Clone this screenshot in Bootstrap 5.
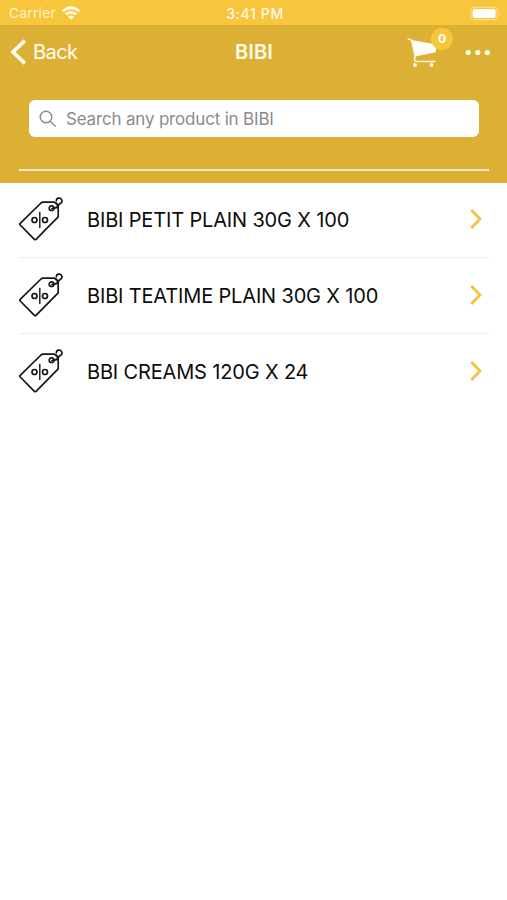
<!DOCTYPE html>
<html lang="en">
<head>
<meta charset="utf-8">
<meta name="viewport" content="width=device-width, initial-scale=1">
<title>BIBI</title>
<link href="https://cdn.jsdelivr.net/npm/bootstrap@5.3.0/dist/css/bootstrap.min.css" rel="stylesheet">
<style>
body { font-family: Inter, "Liberation Sans", sans-serif; min-height: 900px; overflow: hidden; }
svg { display: block; flex: none; }
.status { background: #f8c63d; height: 25px; padding: 2px 9px 0 9px; font-size: 13.7px; line-height: 23px; }
.status > * { flex: 1 1 0; }
.status > :last-child { margin-right: -4px; }
.carrier { color: #fff3cf; letter-spacing: .3px; }
.clock { font-weight: 500; font-size: 14px; letter-spacing: .65px; color: #fffbe9; padding-right: 1px; }
.head { background: #dcb035; height: 158px; }
.topnav { height: 54px; padding: 0 16px 0 10px; }
.topnav > * { flex: 1 1 0; }
.back { font-size: 20px; letter-spacing: -.55px; color: #fffdf2; line-height: 54px; }
.back-text { margin-left: 5px; }
.heading { font-size: 20px; font-weight: 600; letter-spacing: .1px; color: #fffbe9; line-height: 54px; padding-left: 7px; }
.count { left: 24px; top: -9px; width: 22px; height: 22px; background: #f8c63d; font-size: 12px; font-weight: 700; line-height: 22px; }
.search { margin: 21px 28px 0 29px; height: 36.500px; border-radius: 6px; padding-left: 10px; }
.search svg { margin-top: 2px; }
.search input { font-size: 17px; letter-spacing: -.18px; padding: 2px 0 0; margin-left: 9px; }
.search input::placeholder { color: #8b8b8d; opacity: 1; }
.rule { margin: 32.500px 18px 0 19px; height: 2px; background: #f8ebc4; }
.products { margin: -1px 18px 0 19px; }
.products .list-group-item { height: 76px; padding: 0 6px 1px 0; border-color: #ededee; background: transparent; color: #0c0c0c; font-size: 20px; }
.products .list-group-item:last-child { border-bottom: 0; padding-bottom: 2px; }
.label-text { margin-left: 24px; letter-spacing: -.16px; position: relative; top: 1px; }
</style>
<script src="https://cdn.jsdelivr.net/npm/bootstrap@5.3.0/dist/js/bootstrap.bundle.min.js"></script>
</head>
<body class="bg-white">
<svg width="0" height="0" class="d-none" aria-hidden="true">
  <symbol id="tag" viewBox="0 -1 44 44"><g fill="none" stroke="#161616" stroke-width="1.700" stroke-linejoin="round" stroke-linecap="round">
    <path d="M23.800 4.200H35.500L39.200 7.500V18.800L17 41.300Q16.200 42 15.400 41.300L1.200 27Q.4 26.200 1.200 25.300L22 5Q23 4.200 23.800 4.200Z"/>
    <circle cx="32.500" cy="10.200" r="2.300"/><path d="M33 10.500Q38.500 10 38.800 8Q39 7 37.200 5.200"/><path d="M37.300 2.800A2.800 2.800 0 1 1 41.300 5.400L39 7.500"/>
    <circle cx="15.500" cy="22" r="2.500"/><circle cx="26" cy="22" r="2.500"/><path d="M20.800 14.500V29.500" stroke-width="1.400"/></g></symbol>
  <symbol id="next" viewBox="0 0 14 22"><path d="M2.300 2L11 11L2.300 20" fill="none" stroke="#f5c23e" stroke-width="2.800"/></symbol>
</svg>

<div class="status d-flex">
  <div class="carrier d-flex align-items-center"><span>Carrier</span>
    <svg class="ms-1" width="22" height="16" viewBox="0 0 22 16"><g fill="none" stroke="#fffbe9" stroke-width="2.700"><path d="M2.700 5.200Q11-1.700 19.300 5.200"/><path d="M5.700 8.500Q11 4.100 16.300 8.500"/></g><path d="M8 10.800Q11 8.400 14 10.800L11 13.800Z" fill="#fffbe9"/></svg>
  </div>
  <div class="clock text-center">3:41 PM</div>
  <div class="d-flex justify-content-end align-items-center">
    <svg width="32" height="16" viewBox="0 0 32 16"><rect x=".8" y="1.300" width="26.500" height="12.400" rx="3.500" fill="none" stroke="#fbdc82" stroke-width="1.200"/><rect x="2.600" y="3" width="23" height="9" rx="2" fill="#fff"/><path d="M29 5.500Q31.500 7.500 29 9.500Z" fill="#fbdc82"/></svg>
  </div>
</div>

<header class="head">
  <nav class="topnav d-flex align-items-center">
    <a href="#" class="back d-flex align-items-center text-decoration-none"><svg width="18" height="26" viewBox="0 0 18 26"><path d="M14.800 1.600L3 13L14.800 24.400" fill="none" stroke="#fffdf2" stroke-width="3.600"/></svg><span class="back-text">Back</span></a>
    <div class="heading text-center">BIBI</div>
    <div class="d-flex justify-content-end align-items-center">
      <div class="position-relative">
        <svg width="30" height="30" viewBox="0 0 30 30"><path d="M4.500 3L28 7.200Q29 7.500 29 8.700V14Q29 15.300 27.500 15.600L8 19.500Z" fill="#fff"/><path d="M.7 1.700L4.500 3L8.200 19.500L7.400 22Q7.500 24.600 9.500 24.600H28.500" fill="none" stroke="#fff6dc" stroke-width="1.500"/><circle cx="8" cy="28" r="1.900" fill="#fffdf2"/><circle cx="24.500" cy="28" r="1.900" fill="#fffdf2"/></svg>
        <span class="count position-absolute rounded-circle text-white text-center">0</span>
      </div>
      <svg style="margin-left:28px" width="26" height="8" viewBox="0 0 26 8"><g fill="#fffdf2"><circle cx="3.200" cy="4.500" r="2.600"/><circle cx="12.800" cy="4.500" r="2.600"/><circle cx="22.300" cy="4.500" r="2.600"/></g></svg>
    </div>
  </nav>
  <div class="search bg-white d-flex align-items-center">
    <svg width="18" height="18" viewBox="0 0 18 18"><g fill="none" stroke="#8b8b8d" stroke-width="1.400"><circle cx="7" cy="7" r="5.800"/><path d="M11.200 11.200L16.700 16.500"/></g></svg>
    <input class="form-control border-0 bg-transparent shadow-none" type="text" placeholder="Search any product in BIBI">
  </div>
  <div class="rule"></div>
</header>

<main class="products list-group list-group-flush">
  <div class="list-group-item d-flex align-items-center"><svg width="44" height="44"><use href="#tag"/></svg><span class="label-text">BIBI PETIT PLAIN 30G X 100</span><svg class="ms-auto" width="14" height="22"><use href="#next"/></svg></div>
  <div class="list-group-item d-flex align-items-center"><svg width="44" height="44"><use href="#tag"/></svg><span class="label-text">BIBI TEATIME PLAIN 30G X 100</span><svg class="ms-auto" width="14" height="22"><use href="#next"/></svg></div>
  <div class="list-group-item d-flex align-items-center"><svg width="44" height="44"><use href="#tag"/></svg><span class="label-text">BBI CREAMS 120G X 24</span><svg class="ms-auto" width="14" height="22"><use href="#next"/></svg></div>
</main>
</body>
</html>
